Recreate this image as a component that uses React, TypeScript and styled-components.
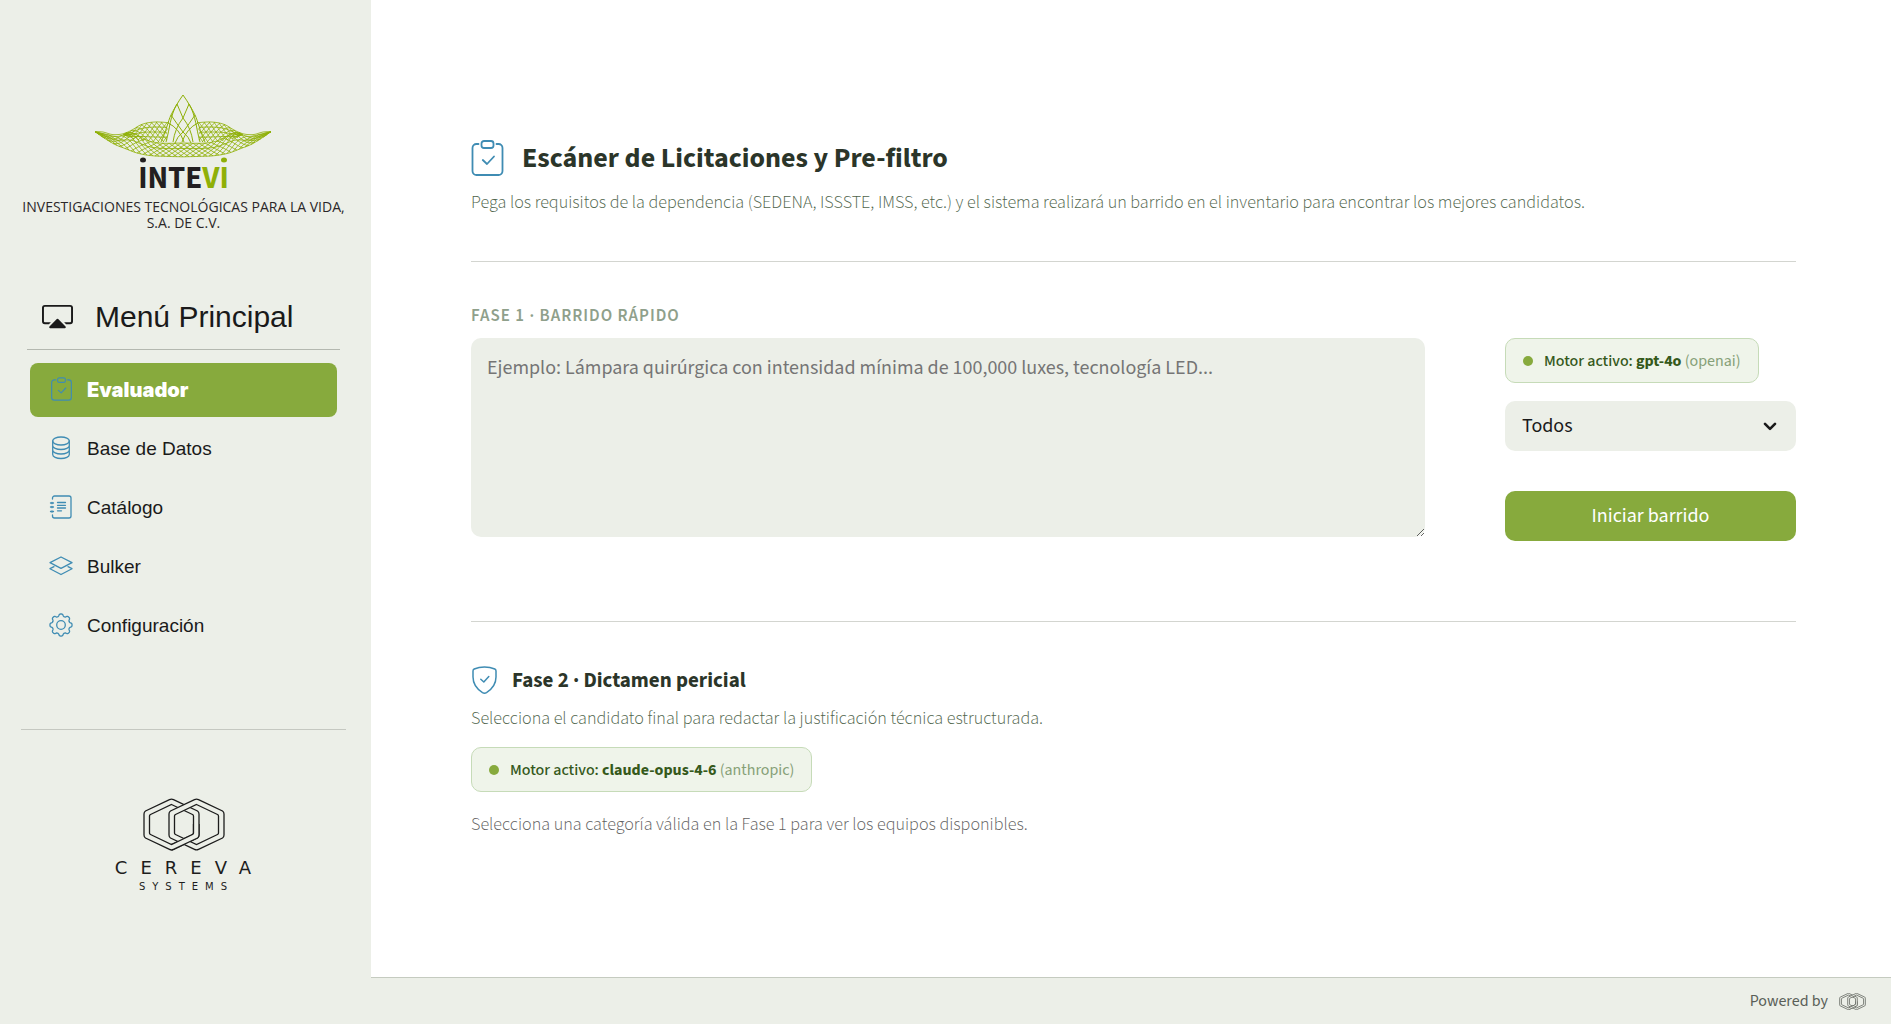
import React from "react";
import styled, { createGlobalStyle, css } from "styled-components";
import { BsCast } from "react-icons/bs";

const color = {
  panel: "#ecefe8",
  green: "#87aa3d",
  leaf: "#8fb008",
  blue: "#3f8cb3",
  ink: "#1a1a1a",
  title: "#2b3529",
  muted: "#50654c",
  rule: "#d3d5d0",
};
const body = '"Source Sans 3", "Noto Sans CJK SC", "Noto Sans", sans-serif';
const arial = '"Liberation Sans", Arial, sans-serif';

const GlobalStyle = createGlobalStyle`
  *, *::before, *::after { box-sizing: border-box; }
  body { margin: 0; background: #fff; color: ${color.ink}; font-family: ${body}; }
  h1, h2, p, ul { margin: 0; padding: 0; }
`;

const Shell = styled.div`
  display: grid;
  grid-template-columns: 371px minmax(0, 1fr);
  min-height: 100vh;
`;
const Sidebar = styled.aside`
  display: flex;
  flex-direction: column;
  padding: 94px 25px 0 21px;
  background: ${color.panel};
`;
const Brand = styled.div`
  display: flex;
  flex-direction: column;
  align-items: center;
`;
const Wordmark = styled.span`
  color: #231f20;
  font: 700 31px/28px ${body};
  span { color: ${color.leaf}; }
`;
const Tagline = styled.p`
  margin-top: 7px;
  font: 400 14px/16px "Open Sans", sans-serif;
  text-align: center;
  white-space: nowrap;
  color: #2b2729;
`;
const MenuTitle = styled.h2`
  display: flex;
  align-items: center;
  gap: 22px;
  height: 62px;
  margin: 57px 6px 13px;
  padding: 0 15px 4px;
  border-bottom: 1px solid #b4b8b0;
  font: 400 30px/36px ${arial};
  svg { width: 31px; height: 31px; }
`;
const NavList = styled.ul`
  display: flex;
  flex-direction: column;
  gap: 5px;
  padding: 0 9px;
  list-style: none;
`;
const NavLink = styled.a<{ $active?: boolean }>`
  display: flex;
  align-items: center;
  gap: 14px;
  height: 54px;
  padding: 0 19px;
  border-radius: 8px;
  color: ${color.ink};
  font: 400 19px/24px ${arial};
  text-decoration: none;
  ${(p) =>
    p.$active &&
    css`
      background: ${color.green};
      color: #fff;
      font: 900 20px/24px Inter, sans-serif;
    `}
`;
const NavIcon = styled.span`
  display: flex;
  justify-content: center;
  width: 24px;
  padding-bottom: 3px;
`;
const SideRule = styled.hr`
  width: 100%;
  margin: 76px 0 68px;
  border: 0;
  border-top: 1px solid #c5c8c1;
`;
const Partner = styled.div`
  display: flex;
  flex-direction: column;
  align-items: center;
  color: #1d1d1d;
`;
const PartnerName = styled.span`
  margin: 8px 0 4px;
  padding-left: 12px;
  font: 400 18px/18px "DejaVu Sans", sans-serif;
  letter-spacing: 13px;
`;
const PartnerSub = styled.span`
  padding-left: 6px;
  font: 400 10px/12px "DejaVu Sans", sans-serif;
  letter-spacing: 7px;
`;

const Page = styled.div`
  display: flex;
  flex-direction: column;
  min-width: 0;
`;
const Main = styled.main`
  flex: 1;
  padding: 136px 95px 40px 100px;
`;
const Title = styled.h1`
  display: flex;
  align-items: center;
  gap: 18px;
  color: ${color.title};
  font: 700 28px/44px ${body};
`;
const SubTitle = styled.h2`
  display: flex;
  align-items: center;
  gap: 14px;
  color: ${color.title};
  font: 700 21px/32px ${body};
`;
const Text = styled.p<{ $gray?: boolean }>`
  color: ${(p) => (p.$gray ? "#606060" : color.muted)};
  font: 300 18px/24px ${body};
`;
const Rule = styled.hr`
  margin: 0;
  border: 0;
  border-top: 1px solid ${color.rule};
`;
const Intro = styled.header`
  display: grid;
  gap: 11px;
  padding-bottom: 46px;
`;
const Phase = styled.section`
  padding: 42px 0 80px;
`;
const Eyebrow = styled.label`
  display: block;
  margin-bottom: 10px;
  color: #8fa08b;
  font: 600 17px/24px ${body};
  letter-spacing: 1px;
`;
const Columns = styled.div`
  display: grid;
  grid-template-columns: minmax(0, 1fr) 291px;
  gap: 80px;
`;
const Requirements = styled.textarea`
  display: block;
  width: 100%;
  height: 199px;
  padding: 16px;
  border: 0;
  border-radius: 10px;
  background: ${color.panel};
  color: ${color.ink};
  font: 400 20px/28px ${body};
  resize: vertical;
  &::placeholder { color: #757575; opacity: 1; }
`;
const Controls = styled.div`
  display: flex;
  flex-direction: column;
  align-items: flex-start;
`;
const Pill = styled.div`
  display: inline-flex;
  align-items: center;
  height: 45px;
  padding: 0 17px;
  border: 1px solid #c6dbb8;
  border-radius: 10px;
  background: #eff4ea;
  color: #35591b;
  font: 500 16px/24px ${body};
  &::before {
    content: "";
    width: 10px;
    height: 10px;
    margin-right: 11px;
    border-radius: 50%;
    background: ${color.green};
  }
  b { font-weight: 700; }
  small { color: #86a077; font-size: 16px; font-weight: 400; }
`;
const SelectWrap = styled.div`
  position: relative;
  width: 100%;
  margin: 18px 0 40px;
  svg {
    position: absolute;
    top: 21px;
    right: 19px;
    pointer-events: none;
  }
`;
const Select = styled.select`
  display: block;
  width: 100%;
  height: 50px;
  padding: 0 17px;
  border: 0;
  border-radius: 10px;
  appearance: none;
  background: ${color.panel};
  color: ${color.ink};
  font: 400 20px/28px ${body};
`;
const Submit = styled.button`
  width: 100%;
  height: 50px;
  border: 0;
  border-radius: 10px;
  background: ${color.green};
  color: #fff;
  font: 400 20px/28px ${body};
`;
const Verdict = styled.section`
  display: flex;
  flex-direction: column;
  align-items: flex-start;
  gap: 11px;
  padding-top: 42px;
`;
const PillRow = styled.div`
  padding: 5px 0 10px;
`;
const Footer = styled.footer`
  display: flex;
  align-items: center;
  justify-content: flex-end;
  gap: 11px;
  height: 47px;
  padding: 0 25px;
  border-top: 1px solid #c5cbc0;
  background: ${color.panel};
  color: #5a5f58;
  font: 400 16px/24px ${body};
`;

type Pt = [number, number];

/* Smooth height profile through a list of points sorted by x. */
function profile(points: Pt[]) {
  return (x: number) => {
    let i = 0;
    while (i < points.length - 2 && x > points[i + 1][0]) i++;
    const a = points[Math.max(0, i - 1)];
    const b = points[i];
    const c = points[i + 1];
    const d = points[Math.min(points.length - 1, i + 2)];
    const w = c[0] - b[0];
    const t = (x - b[0]) / w;
    const m1 = ((c[1] - a[1]) / (c[0] - a[0])) * w;
    const m2 = ((d[1] - b[1]) / (d[0] - b[0])) * w;
    const t2 = t * t;
    const t3 = t2 * t;
    return (2 * t3 - 3 * t2 + 1) * b[1] + (t3 - 2 * t2 + t) * m1 + (3 * t2 - 2 * t3) * c[1] + (t3 - t2) * m2;
  };
}

function strand(top: (x: number) => number, bottom: (x: number) => number, x0: number, skew: number, min: number, max: number) {
  let d = "";
  for (let v = 0; v <= 1.001; v += 0.1) {
    const x = x0 + skew * v;
    if (x < min || x > max) continue;
    d += `${d ? "L" : "M"}${x.toFixed(1)} ${(top(x) * (1 - v) + bottom(x) * v).toFixed(1)}`;
  }
  return d;
}

const rim = profile([[0, 37.7], [8, 38], [17, 40.5], [27, 40], [36, 36.5], [47, 30.3], [60, 28], [74, 28.7]]);
const frontEdge = profile([[0, 37.7], [10, 40], [22, 42.5], [36, 39], [44, 42], [54, 47], [68, 49.2], [88, 49]]);
const base = profile([[0, 37.7], [9, 44], [20, 50.5], [30, 54.5], [42, 59], [56, 61.6], [72, 62.4], [88, 62.8]]);
const trough = profile([[28, 41], [38, 45], [50, 47], [60, 48], [74, 48]]);
const mirror = (f: (x: number) => number) => (x: number) => f(x > 88 ? 176 - x : x);

function trace(f: (x: number) => number, from: number, to: number) {
  let d = "";
  for (let x = from; x <= to; x += 2) d += `${d ? "L" : "M"}${x} ${f(x).toFixed(1)}`;
  return d;
}

function waveLines() {
  const front: string[] = [trace(mirror(frontEdge), 0, 176), trace(mirror(base), 0, 176)];
  for (let x = -16; x <= 188; x += 6) {
    front.push(strand(mirror(frontEdge), mirror(base), x, 20, 0, 176));
    front.push(strand(mirror(frontEdge), mirror(base), x, -20, 0, 176));
  }
  front.push(trace((x) => mirror(frontEdge)(x) * 0.6 + mirror(base)(x) * 0.4, 2, 174));
  const back: string[] = [trace(rim, 0, 74)];
  for (let x = 22; x <= 84; x += 5) {
    back.push(strand(rim, trough, x, -14, 28, 73));
    back.push(strand(rim, trough, x - 16, 18, 28, 73));
  }
  for (const k of [0.25, 0.5, 0.75]) back.push(trace((x) => rim(x) * (1 - k) + trough(x) * k, 30, 72));
  return { front: front.join(""), back: back.join("") };
}
const wave = waveLines();

function WaveMark() {
  return (
    <svg width="178" height="70" viewBox="0 0 178 70" aria-hidden="true">
      <g fill="none" stroke={color.leaf} strokeWidth="0.8">
        <path d={wave.back} />
        <path d={wave.back} transform="matrix(-1 0 0 1 176 0)" />
        <path d={wave.front} />
        <g strokeWidth="1">
          <path d="M66 48C71 38 73 27 76 21S83 8 88 1c5 7 9 14 12 20s5 17 10 27" />
          <path d="M71 48C75 34 75 22 82 10M105 48C101 34 101 22 94 10" />
          <path d="M73 29Q84 34 89 48M103 29Q92 34 87 48M78 48Q80 34 88 24Q96 34 98 48M76 21Q82 30 88 38Q94 30 100 21M82 10Q85 17 88 24Q91 17 94 10M88 38Q82 43 80 49M88 38Q94 43 96 49" />
        </g>
      </g>
      <ellipse cx="48" cy="66" rx="3" ry="2.5" fill="#231f20" />
      <ellipse cx="129" cy="66" rx="3" ry="2.5" fill={color.leaf} />
    </svg>
  );
}

const hex = (cx: number) =>
  `M${cx - 2} 1.6Q${cx} .6 ${cx + 2} 1.6L${cx + 26} 13Q${cx + 27.5} 14 ${cx + 27.5} 16V37Q${cx + 27.5} 39 ${cx + 26} 40L${cx + 2} 51.4Q${cx} 52.4 ${cx - 2} 51.4L${cx - 26} 40Q${cx - 27.5} 39 ${cx - 27.5} 37V16Q${cx - 27.5} 14 ${cx - 26} 13Z` +
  `M${cx} 6.5L${cx + 21} 16.5Q${cx + 22} 17 ${cx + 22} 18V35Q${cx + 22} 36 ${cx + 21} 36.5L${cx} 46.5L${cx - 21} 36.5Q${cx - 22} 36 ${cx - 22} 35V18Q${cx - 22} 17 ${cx - 21} 16.5Z`;

function HexMark({ width, stroke, weight, id }: { width: number; stroke: string; weight: number; id: string }) {
  const style = { fill: color.panel, fillRule: "evenodd" as const, stroke, strokeWidth: weight };
  return (
    <svg width={width} height={Math.round((width * 53) / 82)} viewBox="0 0 82 53" aria-hidden="true">
      <clipPath id={id}>
        <path d="M28 26H60V53H28Z" />
      </clipPath>
      <path d={hex(28.5)} {...style} />
      <path d={hex(53.5)} {...style} />
      <path d={hex(28.5)} {...style} clipPath={`url(#${id})`} />
    </svg>
  );
}

function Drawing({ w, h, box, sw, children }: { w: number; h: number; box: string; sw: number; children: React.ReactNode }) {
  return (
    <svg width={w} height={h} viewBox={box} fill="none" stroke={color.blue} strokeWidth={sw} strokeLinecap="round" strokeLinejoin="round" aria-hidden="true">
      {children}
    </svg>
  );
}
const Clipboard = ({ w, h }: { w: number; h: number }) => (
  <Drawing w={w} h={h} box="0 0 32 36" sw={1.8}>
    <rect x="10" y="1" width="12" height="7" rx="2.5" />
    <path d="M7 4H5a4 4 0 0 0-4 4v23a4 4 0 0 0 4 4h22a4 4 0 0 0 4-4V8a4 4 0 0 0-4-4h-2" />
    <path d="m11.3 20 4.2 4 7-7.5" />
  </Drawing>
);
const Database = () => (
  <Drawing w={20} h={24} box="0 0 20 24" sw={1.3}>
    <ellipse cx="10" cy="5" rx="8.3" ry="4" />
    <path d="M1.700 5v13.500c0 2.200 3.700 4 8.300 4s8.300-1.800 8.300-4V5M1.700 9.500c0 2.200 3.700 4 8.300 4s8.300-1.800 8.300-4M1.700 14c0 2.200 3.700 4 8.300 4s8.300-1.800 8.300-4" />
  </Drawing>
);
const Journal = () => (
  <Drawing w={24} h={24} box="0 0 24 24" sw={1.3}>
    <path d="M3.500 4V3a2 2 0 0 1 2-2H20a2 2 0 0 1 2 2v18a2 2 0 0 1-2 2H5.500a2 2 0 0 1-2-2v-1" />
    <path d="M1.500 8h3M1.500 12h3M1.500 16.500h3M3 7.300v1.400M3 11.300v1.400M3 15.800v1.400M8.500 7.500h8M8.500 10.300h8M8.500 13h8M8.500 15.800h4" />
  </Drawing>
);
const Layers = () => (
  <Drawing w={24} h={20} box="0 0 24 20" sw={1.3}>
    <path d="m12 1 11 5.700-11 5.700L1 6.700zM5 10.700l-4 2L12 18.500l11-5.800-4-2" />
  </Drawing>
);
const gearPath = (() => {
  let d = "";
  for (let i = 0; i < 144; i++) {
    const a = (i / 144) * Math.PI * 2;
    const r = 9.9 + 1.2 * Math.tanh(1.6 * Math.cos(8 * a) + 0.2);
    d += `${i ? "L" : "M"}${(12 + r * Math.sin(a)).toFixed(2)} ${(12 - r * Math.cos(a)).toFixed(2)}`;
  }
  return d + "Z";
})();
const Gear = () => (
  <Drawing w={24} h={24} box="0 0 24 24" sw={1.3}>
    <path d={gearPath} />
    <circle cx="12" cy="12" r="4.300" />
  </Drawing>
);
const Shield = () => (
  <Drawing w={27} h={28} box="0 0 27 28" sw={1.5}>
    <path d="M13.500 1c4 0 7.500.8 10.300 2 .9.400 1.200 1 1.200 2v6c0 6-3.500 11.800-9.500 15.600q-2 1.200-4 0C5.500 22.800 2 17 2 11V5c0-1 .3-1.600 1.200-2C6 1.800 9.500 1 13.500 1Z" />
    <path d="m9.800 13.300 3 2.700 5-5.500" />
  </Drawing>
);

const links = [
  { label: "Evaluador", icon: <Clipboard w={21} h={24} /> },
  { label: "Base de Datos", icon: <Database /> },
  { label: "Catálogo", icon: <Journal /> },
  { label: "Bulker", icon: <Layers /> },
  { label: "Configuración", icon: <Gear /> },
];

function Engine({ model, vendor }: { model: string; vendor: string }) {
  return (
    <Pill>
      <span>
        Motor activo: <b>{model}</b> <small>({vendor})</small>
      </span>
    </Pill>
  );
}

export default function App() {
  return (
    <>
      <GlobalStyle />
      <Shell lang="es">
        <Sidebar>
          <Brand>
            <WaveMark />
            <Wordmark>
              INTE<span>VI</span>
            </Wordmark>
            <Tagline>
              INVESTIGACIONES TECNOLÓGICAS PARA LA VIDA,
              <br />
              S.A. DE C.V.
            </Tagline>
          </Brand>
          <MenuTitle>
            <BsCast aria-hidden="true" />
            Menú Principal
          </MenuTitle>
          <nav>
            <NavList>
              {links.map((l, i) => (
                <li key={l.label}>
                  <NavLink href="#" $active={i === 0}>
                    <NavIcon>{l.icon}</NavIcon>
                    {l.label}
                  </NavLink>
                </li>
              ))}
            </NavList>
          </nav>
          <SideRule />
          <Partner>
            <HexMark width={82} stroke="#1d1d1d" weight={1.3} id="weave-large" />
            <PartnerName>CEREVA</PartnerName>
            <PartnerSub>SYSTEMS</PartnerSub>
          </Partner>
        </Sidebar>
        <Page>
          <Main>
            <Intro>
              <Title>
                <Clipboard w={33} h={36} />
                Escáner de Licitaciones y Pre-filtro
              </Title>
              <Text>
                Pega los requisitos de la dependencia (SEDENA, ISSSTE, IMSS, etc.) y el sistema realizará un barrido en el inventario para encontrar los mejores candidatos.
              </Text>
            </Intro>
            <Rule />
            <Phase>
              <Eyebrow htmlFor="requisitos">FASE 1 · BARRIDO RÁPIDO</Eyebrow>
              <Columns>
                <Requirements id="requisitos" placeholder="Ejemplo: Lámpara quirúrgica con intensidad mínima de 100,000 luxes, tecnología LED..." />
                <Controls>
                  <Engine model="gpt-4o" vendor="openai" />
                  <SelectWrap>
                    <Select aria-label="Categoría">
                      <option>Todos</option>
                    </Select>
                    <svg width="14" height="9" viewBox="0 0 14 9" fill="none" stroke={color.ink} strokeWidth="2.6" strokeLinecap="round" strokeLinejoin="round" aria-hidden="true">
                      <path d="m2 1.800 5 5 5-5" />
                    </svg>
                  </SelectWrap>
                  <Submit type="button">Iniciar barrido</Submit>
                </Controls>
              </Columns>
            </Phase>
            <Rule />
            <Verdict>
              <SubTitle>
                <Shield />
                Fase 2 · Dictamen pericial
              </SubTitle>
              <Text>Selecciona el candidato final para redactar la justificación técnica estructurada.</Text>
              <PillRow>
                <Engine model="claude-opus-4-6" vendor="anthropic" />
              </PillRow>
              <Text $gray>Selecciona una categoría válida en la Fase 1 para ver los equipos disponibles.</Text>
            </Verdict>
          </Main>
          <Footer>
            Powered by
            <HexMark width={27} stroke="#5f635d" weight={2.4} id="weave-small" />
          </Footer>
        </Page>
      </Shell>
    </>
  );
}
